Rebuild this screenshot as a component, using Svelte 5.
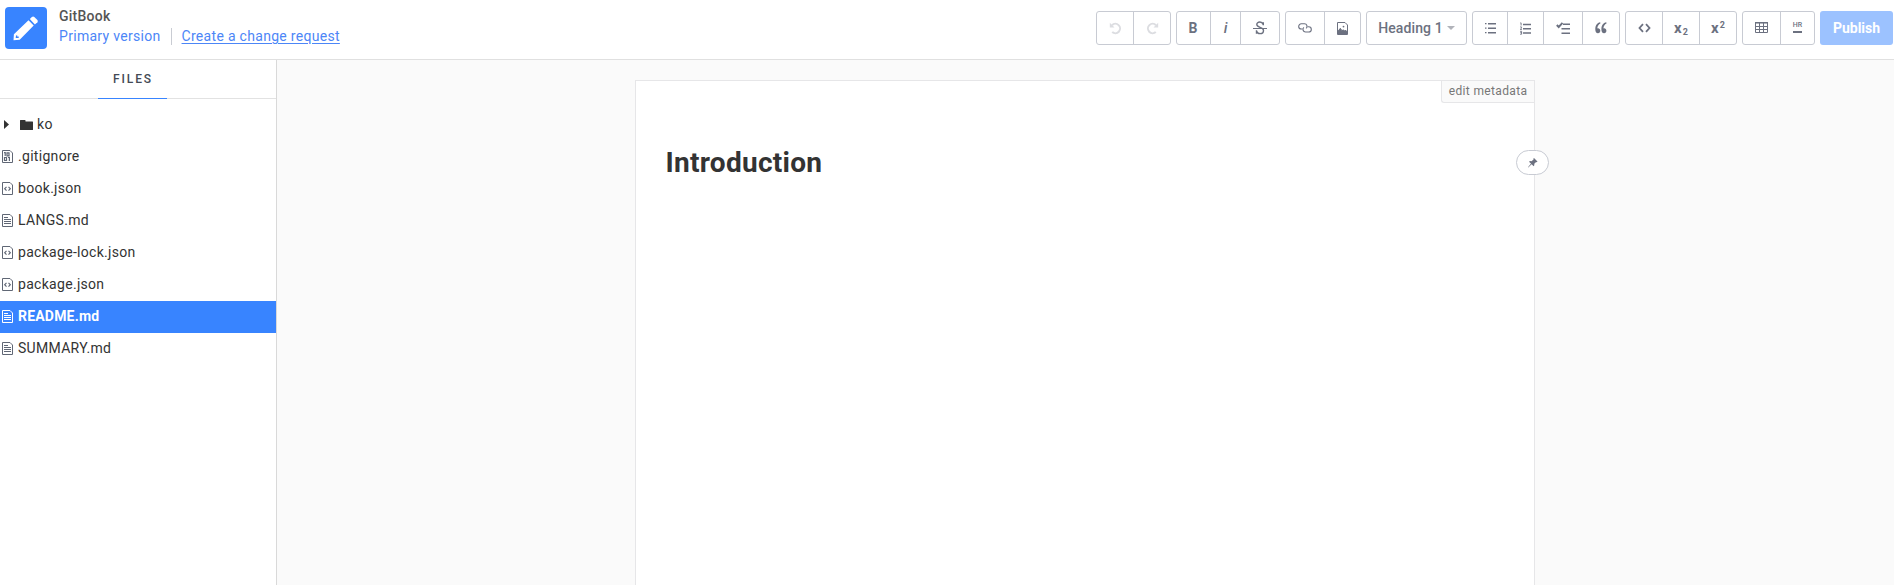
<script>
  const groups = [
    [['undo', 36], ['redo', 37]],
    [['bold', 33], ['italic', 30], ['strike', 39]],
    [['link', 38], ['image', 36]],
    [['heading', 99]],
    [['ul', 34], ['ol', 36], ['check', 39], ['quote', 37]],
    [['code', 36], ['subscript', 37], ['superscript', 37]],
    [['table', 37], ['hr', 34]]
  ];
  const files = [
    ['binary', '.gitignore'],
    ['code', 'book.json'],
    ['text', 'LANGS.md'],
    ['code', 'package-lock.json'],
    ['code', 'package.json'],
    ['text', 'README.md'],
    ['text', 'SUMMARY.md']
  ];
  let selected = $state('README.md');
</script>

{#snippet icon(name)}
  {#if name === 'undo' || name === 'redo'}
    <svg class:flip={name === 'redo'} width="13" height="13" viewBox="0 0 13 13" fill="none" stroke="currentColor" stroke-width="2">
      <path d="M3 3.200A4.700 4.700 0 1 1 3.200 10" /><path d="M.8.8V5.500h4.700z" fill="currentColor" stroke="none" />
    </svg>
  {:else if name === 'bold'}
    <span class="b">B</span>
  {:else if name === 'italic'}
    <span class="i">i</span>
  {:else if name === 'strike'}
    <svg width="14" height="14" viewBox="0 0 14 14" fill="none" stroke="currentColor">
      <path d="M10.300 4.200V1.200M10.200 3.400C9.500 1.600 8.300 1 6.900 1 5 1 3.800 2 3.800 3.600c0 3.300 6.700 2.200 6.700 5.800 0 2-1.400 3.200-3.500 3.200-1.800 0-3.100-.8-3.500-2.600M3.500 9.200v3.500" stroke-width="1.400" />
      <path d="M0 7.500h14" />
    </svg>
  {:else if name === 'link'}
    <svg width="14" height="12" viewBox="0 0 14 12" fill="none" stroke="currentColor" stroke-width="1.100">
      <path d="M4.500 7H3.300a2.600 2.600 0 0 1 0-5.200h3.200a2.600 2.600 0 0 1 1.600 4.600" />
      <path d="M9.500 4.800h1.200a2.600 2.600 0 0 1 0 5.200H7.500a2.600 2.600 0 0 1-1.600-4.600" />
    </svg>
  {:else if name === 'image'}
    <svg width="11" height="13" viewBox="0 0 11 13" fill="none" stroke="currentColor">
      <path d="M.5.5h7.500l2.500 2.500v9.500H.5z" /><path d="M1 12V9.300l2.300-3 1.700 2.500L6.300 7.800l1.200 1.300L8.500 8 10 10v2z" fill="currentColor" /><circle cx="6.500" cy="4.600" r=".9" fill="currentColor" stroke="none" />
    </svg>
  {:else if name === 'heading'}
    <span class="label">Heading 1<i class="caret"></i></span>
  {:else if name === 'ul'}
    <svg width="11" height="12" viewBox="0 0 11 12" fill="currentColor">
      <path d="M0 1h1.500v1.300H0zM0 5.500h1.500v1.300H0zM0 10h1.500v1.300H0zM3 .9h8v1.500H3zM3 5.400h8v1.500H3zM3 9.900h8v1.500H3z" />
    </svg>
  {:else if name === 'ol'}
    <svg width="11" height="13" viewBox="0 0 11 13" fill="none" stroke="currentColor">
      <path d="M3 2.500H11M3 6.700H11M3 11H11" stroke-width="1.500" />
      <path d="M.3.900h.8v2.600M.2 4.900h1.200v1.200L.3 7.600h1.600M.2 9.400h1.400v1.200H.6h1v1.600H.1" stroke-width=".9" />
    </svg>
  {:else if name === 'check'}
    <svg width="14" height="13" viewBox="0 0 14 13" fill="none" stroke="currentColor">
      <path d="M7 2.200H14M5.500 6.700H14M5.500 11.200H14" stroke-width="1.500" /><path d="M.8 3l1.900 2L6.500.9" stroke-width="1.900" />
    </svg>
  {:else if name === 'quote'}
    <svg width="12" height="12" viewBox="0 0 12 12" fill="currentColor">
      <path id="mark" d="M5.200.3C2.100.8.3 3.600.3 7.200c0 2.500 1 4.100 2.700 4.100 1.400 0 2.300-1.100 2.300-2.500 0-1.500-1-2.500-2.300-2.500-.3 0-.5 0-.7.1.2-2.200 1.200-3.800 3.100-4.800z" />
      <use href="#mark" x="6.100" />
    </svg>
  {:else if name === 'code'}
    <svg width="13" height="10" viewBox="0 0 13 10" fill="none" stroke="currentColor" stroke-width="1.800">
      <path d="M5 1.200L1.500 5 5 8.800M8 1.200L11.500 5 8 8.800" />
    </svg>
  {:else if name === 'subscript'}
    <span class="x">x<small class="lower">2</small></span>
  {:else if name === 'superscript'}
    <span class="x">x<small class="upper">2</small></span>
  {:else if name === 'table'}
    <svg class="table-icon" width="13" height="11" viewBox="0 0 13 11" fill="none" stroke="currentColor">
      <path d="M.5.5h12v10H.5zM.5 4.500h12M.5 7.500h12M4.500 1v9.500M8.500 1v9.500" /><path d="M0 .8h13" stroke-width="1.500" />
    </svg>
  {:else if name === 'hr'}
    <span class="rule"><em>HR</em></span>
  {/if}
{/snippet}

{#snippet fileIcon(kind)}
  <svg class="file" width="11" height="13" viewBox="0 0 11 13" fill="none" stroke="currentColor">
    <path d="M.5.5h7.500l2.500 2.500v9.500H.5z" />
    {#if kind === 'text'}
      <path d="M2 3.500h4M2 5.500h7M2 7.500h7M2 9.500h7" />
    {:else if kind === 'code'}
      <path d="M4.500 4.800L2.700 6.700l1.800 1.900M6.500 4.800l1.800 1.900-1.800 1.900" stroke-width="1.200" />
    {:else}
      <path d="M2 2.700h1.200v3.300M5 2.800h2v3H5zM2.500 7.500h2v3h-2zM6 7.500h1.400v3.500" stroke-width="1.200" />
    {/if}
  </svg>
{/snippet}

<div class="app">
  <header>
    <div class="logo">
      <svg width="26" height="26" viewBox="0 0 26 26" fill="#fff">
        <path fill-rule="evenodd" d="M.5 25.200L.9 19.200 15.500 5.200l5.200 5.200L6.700 24.700zM3 20.400l-.3 2.700 3-.2v-1.400H4.200v-1.200z" />
        <path d="M16.800 4L18.900 2.100q1.200-1 2.400 0l3.100 3q.9 1.100 0 2.200l-2.500 2.200z" />
      </svg>
    </div>
    <div class="title">
      <strong>GitBook</strong>
      <div class="version"><span>Primary version</span><a href="#change">Create a change request</a></div>
    </div>
    <div class="tools">
      {#each groups as group}
        <div class="group">
          {#each group as [name, width]}
            <button class={name} style:width="{width}px" aria-label={name}>{@render icon(name)}</button>
          {/each}
        </div>
      {/each}
      <button class="publish">Publish</button>
    </div>
  </header>
  <div class="body">
    <aside>
      <nav><span>FILES</span></nav>
      <ul>
        <li class="folder">
          <svg class="arrow" width="5" height="9" viewBox="0 0 5 9"><path d="M0 0l5 4.500-5 4.500z" fill="currentColor" /></svg>
          <svg width="13" height="10" viewBox="0 0 13 10" fill="currentColor"><path d="M0 .5q0-.5.500-.5h4.500q.5 0 .5.500V1.500h7q.5 0 .5.500V9.500q0 .5-.5.500H.5q-.5 0-.5-.5z" /></svg>
          <span>ko</span>
        </li>
        {#each files as [kind, name]}
          <li class:active={name === selected}>{@render fileIcon(kind)}<span>{name}</span></li>
        {/each}
      </ul>
    </aside>
    <main>
      <article>
        <div class="meta">edit metadata</div>
        <h1>Introduction</h1>
        <div class="pin">
          <svg width="10" height="10" viewBox="0 0 10 10" fill="currentColor"><path d="M6 0l3.500 3.500-.7.700-.7-.200-1.800 1.800q.3 1.500-.6 2.500L3.600 6.200.3 9.500 0 9.200 3 5.600.9 3.700q1.200-.9 2.700-.5L5.700 1.300 5.400.6z" /></svg>
        </div>
      </article>
    </main>
  </div>
</div>

<style>
  :global(body) { margin: 0; overflow: hidden; }
  .app { width: 100vw; height: 100vh; display: flex; flex-direction: column; background: #fff; font-family: Roboto, sans-serif; font-size: 14px; color: #333; letter-spacing: 0.3px; }
  header { height: 59px; flex: none; display: flex; border-bottom: 1px solid #e0e0e0; }
  .logo { width: 42px; height: 42px; margin: 7px 0 0 5px; border-radius: 4px; background: #3884ff; display: flex; align-items: center; justify-content: center; }
  .title { margin: 7px 0 0 12px; display: flex; flex-direction: column; }
  .title strong { font-weight: 500; line-height: 19px; color: #555; letter-spacing: 0.25px; }
  .version { display: flex; align-items: center; margin-top: 2px; line-height: 17px; color: #4c86f7; }
  .version span { padding-right: 10px; border-right: 1px solid #c9ccd3; }
  .version a { margin-left: 10px; color: #4c86f7; text-underline-offset: 2px; }
  .tools { margin: 11px 1px 0 auto; display: flex; gap: 5px; height: 34px; }
  .group { display: flex; box-sizing: border-box; height: 34px; border: 1px solid #c8cbd3; border-radius: 3px; }
  button { font: inherit; padding: 0; margin: 0; border: 0; background: none; color: #6c7180; display: flex; align-items: center; justify-content: center; box-sizing: border-box; }
  .group button + button { border-left: 1px solid #c8cbd3; }
  .group .undo, .group .redo { color: #dcdde1; }
  .flip { transform: scaleX(-1); }
  .b { font-weight: 700; font-size: 14px; letter-spacing: 0; margin-right: 1px; }
  .i { font-weight: 500; font-style: italic; font-size: 15px; letter-spacing: 0; }
  .label { font-weight: 500; display: flex; align-items: center; letter-spacing: 0.1px; }
  .caret { border: 4px solid transparent; border-top-color: #b1b3ba; border-bottom: 0; margin-left: 4px; }
  .x { font-weight: 700; font-size: 15px; letter-spacing: 0; }
  .x small { font-size: 9px; font-weight: 700; display: inline-block; position: relative; margin-left: 1px; }
  .lower { top: 2px; }
  .upper { top: -5px; }
  .table-icon { margin-bottom: 2px; }
  .rule { display: flex; border-bottom: 2px solid #6c7180; padding: 0 0 3px; margin-bottom: 1px; }
  .rule em { font: 500 7px/6px Roboto, sans-serif; letter-spacing: 0; }
  .publish { width: 73px; background: #9cc2ff; color: #fff; border-radius: 3px; font-weight: 700; letter-spacing: 0; }
  .body { flex: 1; display: flex; min-height: 0; }
  aside { width: 276px; flex: none; border-right: 1px solid #d9d9d9; }
  nav { height: 38px; border-bottom: 1px solid #e2e2e2; display: flex; justify-content: center; padding-right: 11px; }
  nav span { height: 38px; width: 69px; border-bottom: 1px solid #3884ff; text-align: center; font-size: 12px; font-weight: 500; letter-spacing: 1.900px; line-height: 38px; color: #444a55; text-indent: 1px; }
  ul { margin: 10px 0 0; padding: 0; list-style: none; }
  li { height: 32px; display: flex; align-items: center; padding-left: 2px; box-sizing: border-box; }
  li:not(.active) { padding-bottom: 1px; }
  li span { margin-left: 5px; line-height: 17px; }
  .folder span { margin-left: 4px; }
  .file { color: #606775; }
  .active { background: #3884ff; color: #fff; font-weight: 700; letter-spacing: 0.2px; padding-bottom: 1px; }
  .active .file { color: #fff; }
  .arrow { margin: 0 10px 0 2px; }
  .folder .arrow + svg { margin-left: 1px; }
  main { flex: 1; background: #fafafa; display: flex; justify-content: center; padding: 20px 0 0; }
  article { width: 898px; position: relative; left: -0.500px; border: 1px solid #e6e6e8; border-bottom: 0; background: #fff; }
  .meta { position: absolute; right: 0; top: 0; height: 21px; width: 92px; border-left: 1px solid #e6e6e8; border-bottom: 1px solid #e6e6e8; border-radius: 0 0 0 3px; background: #fafafa; font-size: 12px; line-height: 20px; text-align: center; color: #777; letter-spacing: 0.35px; }
  h1 { font-size: 28px; line-height: 34px; font-weight: 700; margin: 65px 0 0 29.500px; letter-spacing: 0.28px; }
  .pin { position: absolute; right: -15px; top: 69px; width: 31px; height: 23px; border: 1px solid #c8cbd3; border-radius: 13px; background: #fff; display: flex; align-items: center; justify-content: center; color: #6c7180; }
</style>
